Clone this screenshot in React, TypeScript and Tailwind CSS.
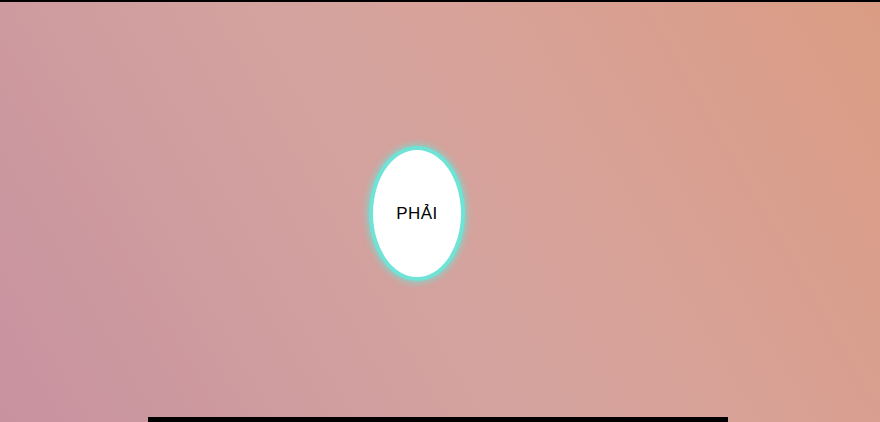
export default function App() {
  return (
    <div className="w-[880px] h-[422px] flex flex-col overflow-hidden border-t-2 border-black bg-[linear-gradient(60deg,#c8929f_0%,#d4a39f_45%,#d8a298_65%,#da9c83_100%)]">
      <div className="flex-1 flex items-start pl-[369px] pt-[144px]">
        <div className="w-[96px] h-[135px] rounded-[50%] bg-white border-[4px] border-[#6fe3d6] shadow-[0_0_6px_2px_rgba(111,227,214,0.7)] flex items-center justify-center">
          <span className="text-[17px] text-black font-['Liberation_Sans',sans-serif] tracking-[0.5px]">PHẢI</span>
        </div>
      </div>
      <div className="ml-[148px] w-[580px] h-[5px] bg-black" />
    </div>
  );
}
